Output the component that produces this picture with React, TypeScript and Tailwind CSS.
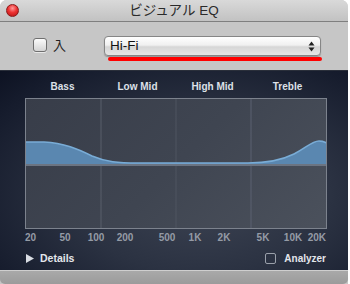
import React from 'react';

const bands = ['Bass', 'Low Mid', 'High Mid', 'Treble'];

// frequency ticks, x in px from left of the graph (100px per decade)
const ticks = [
  { label: '20', x: 0, align: 'left' },
  { label: '50', x: 40, align: 'center' },
  { label: '100', x: 71, align: 'center' },
  { label: '200', x: 100, align: 'center' },
  { label: '500', x: 142, align: 'center' },
  { label: '1K', x: 170, align: 'center' },
  { label: '2K', x: 199, align: 'center' },
  { label: '5K', x: 238, align: 'center' },
  { label: '10K', x: 268, align: 'center' },
  { label: '20K', x: 301, align: 'right' },
];

const curve =
  'M0,43 L18,43 C38,44 52,50 66,57 C80,63 92,64 112,64 L222,64 C242,64 256,61 268,55 C280,49 286,42 293,42 C297,42 299,43 301,44';

function EqGraph() {
  return (
    <div className="relative ml-[25px] w-[302px] h-[131px] border border-[#7c828d] bg-[linear-gradient(135deg,#383d49_0%,#3f4551_50%,#4b515c_100%)]">
      <svg width="300" height="129" className="absolute left-0 top-0">
        <line x1="75" y1="0" x2="75" y2="129" stroke="#585e6a" strokeWidth="1" />
        <line x1="150" y1="0" x2="150" y2="129" stroke="#4f5561" strokeWidth="1" />
        <line x1="225" y1="0" x2="225" y2="129" stroke="#5b6170" strokeWidth="1" />
        <path d={curve + ' L301,66 L0,66 Z'} fill="#5a87b0" />
        <line x1="0" y1="66" x2="300" y2="66" stroke="#6b7482" strokeWidth="2" />
        <path d={curve} fill="none" stroke="#79acd6" strokeWidth="1.6" />
      </svg>
    </div>
  );
}

export default function App() {
  const ui = { fontFamily: '"Liberation Sans", Arial, sans-serif' };

  return (
    <div className="w-[350px] h-[284px] bg-white overflow-hidden" style={ui}>
      <div className="w-[348px] h-full flex flex-col rounded-t-[7px] overflow-hidden bg-[#c6c6c6]">
        {/* Title bar */}
        <div className="relative h-[22px] flex items-center justify-center border-b border-[#7f7f7f] bg-[linear-gradient(#d9d9d9,#c2c2c2)]">
          <div className="absolute left-[6px] top-[4px] w-[13px] h-[13px] rounded-full border border-[#8a1a1a] bg-[radial-gradient(circle_at_50%_30%,#ff9a9a_0%,#ee3333_45%,#b11212_100%)]" />
          <span
            className="text-[13.5px] text-[#2a2a2a] leading-none"
            style={{ fontFamily: '"Liberation Sans", "Noto Sans CJK JP", sans-serif' }}
          >
            ビジュアル EQ
          </span>
        </div>

        {/* Controls */}
        <div className="h-[49px] flex items-center pl-[33px] border-b border-[#2a2f3a]">
          <div className="w-[14px] h-[14px] -mt-[2px] rounded-[3px] border border-[#6f6f6f] bg-[linear-gradient(#fbfbfb,#d4d4d4)] shadow-[0_1px_0_#e8e8e8]" />
          <span
            className="ml-[6px] -mt-[2px] text-[13px] text-[#222]"
            style={{ fontFamily: '"Noto Sans CJK JP", sans-serif' }}
          >
            入
          </span>
          <div className="relative ml-[38px]">
            <div className="w-[217px] h-[20px] flex items-center justify-between px-[5px] rounded-[4px] border border-[#868686] bg-[linear-gradient(#ffffff,#f0f0f0_45%,#d6d6d6_55%,#e6e6e6)] shadow-[0_1px_1px_rgba(0,0,0,0.25)]">
              <span className="text-[13.5px] text-[#111] leading-none">Hi-Fi</span>
              <svg width="7" height="11" viewBox="0 0 7 11">
                <path d="M3.5 0.5 L6.5 4.5 L0.5 4.5 Z" fill="#222" />
                <path d="M3.5 10.5 L6.5 6.5 L0.5 6.5 Z" fill="#222" />
              </svg>
            </div>
            <div className="absolute left-[4px] top-[21px] w-[214px] h-[4px] rounded-full bg-[#ff0000]" />
          </div>
        </div>

        {/* Dark EQ panel */}
        <div className="flex-1 flex flex-col bg-[radial-gradient(ellipse_at_58%_62%,#3d4453_0%,#2b3242_45%,#151b2c_85%,#0d1222_100%)]">
          <div className="mt-[9px] ml-[25px] w-[300px] grid grid-cols-4 text-[10px] font-bold leading-[13px] text-[#dde1e8]">
            {bands.map((b) => (
              <div key={b} className="text-center">
                {b}
              </div>
            ))}
          </div>

          <div className="mt-[5px]">
            <EqGraph />
          </div>

          <div className="relative ml-[25px] w-[302px] h-[13px] mt-[2px] text-[10px] font-bold leading-[13px] text-[#959ba6]">
            {ticks.map((t) => (
              <span
                key={t.label}
                className={
                  t.align === 'left'
                    ? 'absolute top-0'
                    : t.align === 'right'
                      ? 'absolute top-0 -translate-x-full'
                      : 'absolute top-0 -translate-x-1/2'
                }
                style={{ left: t.x }}
              >
                {t.label}
              </span>
            ))}
          </div>

          <div className="flex items-center justify-between mt-[9px] pl-[26px] pr-[22px]">
            <div className="flex items-center gap-[6px]">
              <svg width="8" height="9" viewBox="0 0 8 9">
                <path d="M0 0 L8 4.5 L0 9 Z" fill="#d9dde3" />
              </svg>
              <span className="text-[10.5px] font-bold text-[#e3e6eb] leading-none">Details</span>
            </div>
            <div className="flex items-center gap-[8px]">
              <div className="w-[11px] h-[11px] rounded-[2px] border border-[#9aa0aa]" />
              <span className="text-[10px] font-bold text-[#e3e6eb] leading-none">Analyzer</span>
            </div>
          </div>
        </div>

        {/* Bottom strip */}
        <div className="h-[14px] shrink-0 rounded-b-[5px] border-t border-[#cfcfcf] bg-[linear-gradient(#a9a9a9,#9b9b9b)]" />
      </div>
    </div>
  );
}
